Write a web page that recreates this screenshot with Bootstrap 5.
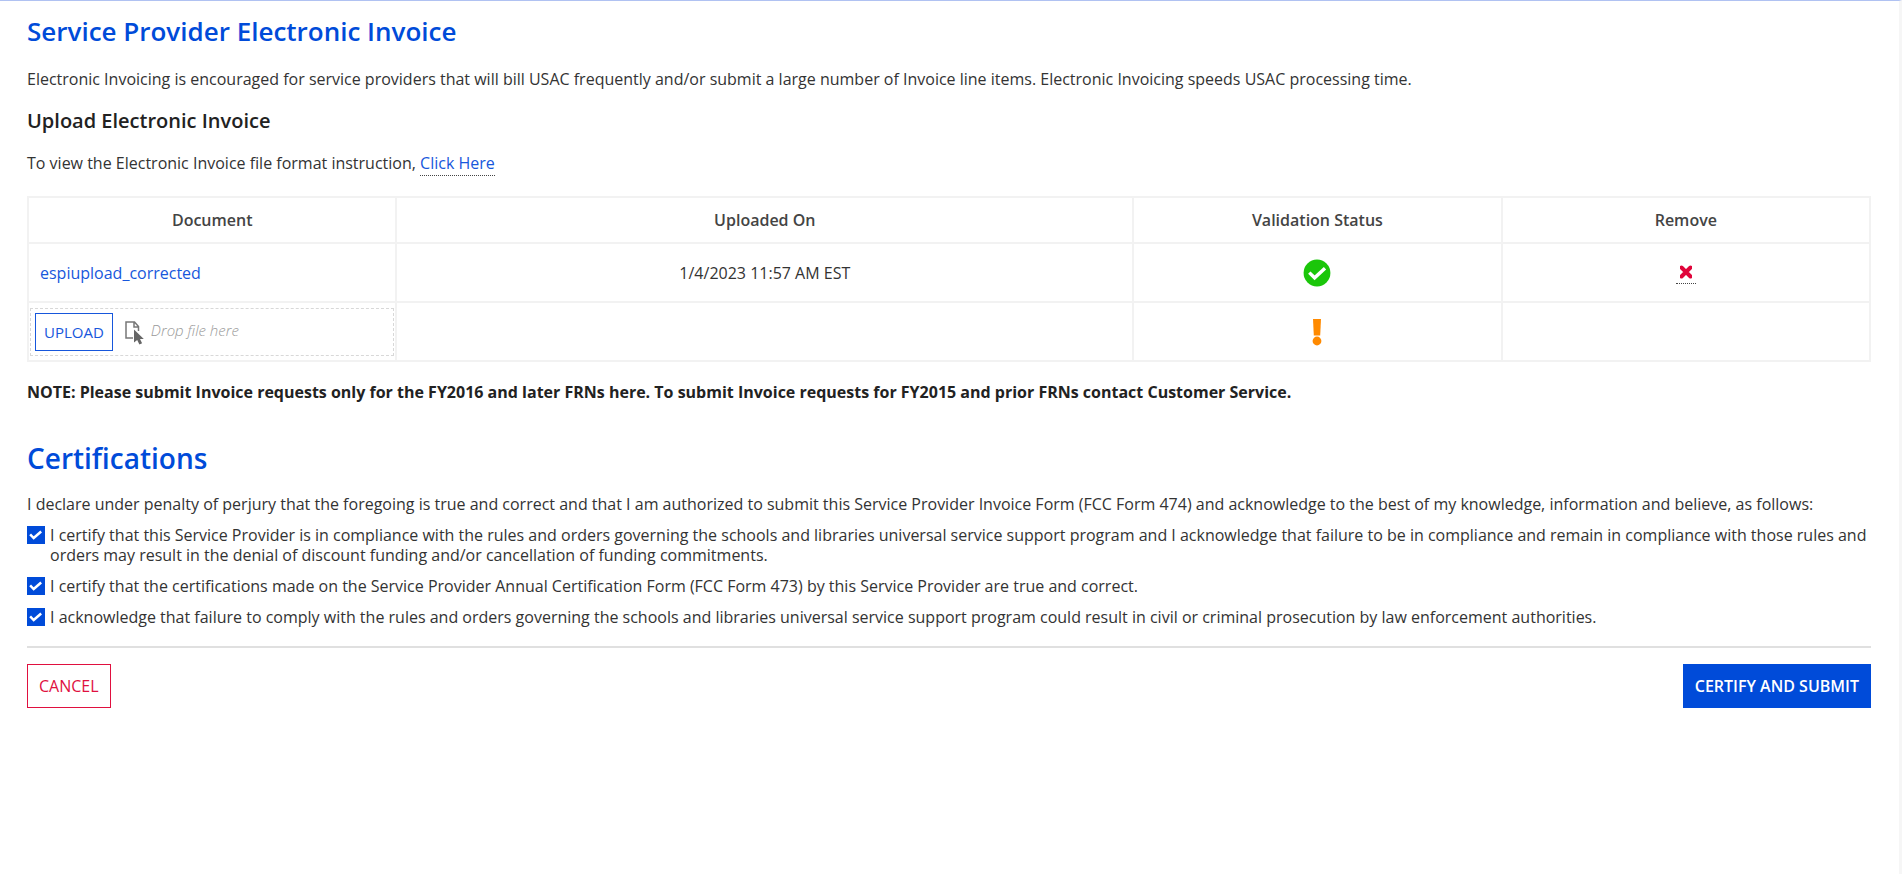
<!DOCTYPE html>
<html lang="en">
<head>
<meta charset="utf-8">
<meta name="viewport" content="width=device-width, initial-scale=1">
<title>Service Provider Electronic Invoice</title>
<link href="https://cdn.jsdelivr.net/npm/bootstrap@5.3.0/dist/css/bootstrap.min.css" rel="stylesheet">
<style>
  :root { --brand: #004bd9; --danger-ink: #e0103f; --grid-line: #f2f2f2; }
  body { font-family: "Open Sans", sans-serif; font-size: 16px; line-height: 20px; color: #333; background: #fff; }
  .page-shell { min-height: 100vh; border-top: 1px solid #b0c2f2; border-right: 3px solid #f6f6f6; padding: 13px 28px 24px 27px; }
  h1, h2 { color: var(--brand); font-weight: 600; margin: 0; }
  h1 { font-size: 26px; line-height: 35px; }
  h2 { font-size: 28px; line-height: 32px; }
  h3 { font-size: 20px; line-height: 24px; font-weight: 600; color: #222; margin: 0; }
  a { color: #1757dc; text-decoration: none; }
  .dotted-link { border-bottom: 1px dotted #444; padding-bottom: 1px; }
  .format-help { margin: 20px 0 23px; }
  .doc-table { table-layout: fixed; margin: 0; --bs-table-color: #333; border-color: var(--grid-line); }
  .doc-table > :not(caption) > * > * { border: 2px solid var(--grid-line); padding: 0 11px; }
  .doc-table thead th { height: 46px; font-weight: 600; color: #444; text-align: center; vertical-align: middle; }
  .doc-table tbody td { height: 59px; text-align: center; vertical-align: middle; }
  .doc-table tbody td.doc-cell { text-align: left; }
  .doc-table tbody td.drop-cell { padding: 0 1px; }
  .drop-zone { border: 1px dashed #d8d8d8; height: 48px; padding: 0 4px; }
  .btn { --bs-btn-border-radius: 0; font-size: 16px; line-height: 20px; }
  .btn-upload { color: #1757dc; border: 1px solid #1757dc; font-size: 15px; padding: 8px; }
  .btn-upload:hover { color: #fff; background: var(--brand); }
  .drop-hint { color: #999; font-size: 15px; font-style: italic; font-weight: 300; padding-bottom: 4px; }
  .remove-link { padding: 0 4px 1px; }
  .note-text { font-weight: 700; color: #222; }
  .cert-list { gap: 11px; margin-top: 11px; }
  .form-check { padding-left: 23px; min-height: 20px; margin: 0; }
  .form-check .form-check-input { width: 18px; height: 18px; margin: 1px 0 0 -23px; border-radius: 0; border-color: var(--brand); }
  .form-check-input:checked { background-color: var(--brand); }
  .form-check-input:checked[type=checkbox] {
    background-image: url("data:image/svg+xml,%3csvg xmlns='http://www.w3.org/2000/svg' viewBox='0 0 18 18'%3e%3cpath fill='none' stroke='%23fff' stroke-width='2.8' d='M2.400 8.400l4 4L14.800 5'/%3e%3c/svg%3e"); }
  .form-check-label { display: block; }
  .rule-line { border-top: 2px solid #e0e0e0; opacity: 1; margin: 19px 0 16px; }
  .btn-cancel { color: var(--danger-ink); border: 1px solid var(--danger-ink); font-weight: 500; padding: 11px; }
  .btn-cancel:hover { color: #fff; background: var(--danger-ink); }
  .btn-certify { color: #fff; background: var(--brand); border: 1px solid var(--brand); font-weight: 600; padding: 11px; }
  .btn-certify:hover { color: #fff; background: #003cae; }
  svg { display: block; }
</style>
</head>
<body>
<main class="page-shell">
  <h1>Service Provider Electronic Invoice</h1>
  <p class="mt-3 pt-1 mb-3">Electronic Invoicing is encouraged for service providers that will bill USAC frequently and/or submit a large number of Invoice line items. Electronic Invoicing speeds USAC processing time.</p>
  <h3 class="pt-1">Upload Electronic Invoice</h3>
  <p class="format-help">To view the Electronic Invoice file format instruction, <a href="#" class="dotted-link">Click Here</a></p>

  <table class="table doc-table">
    <colgroup><col style="width:20%"><col style="width:40%"><col style="width:20%"><col style="width:20%"></colgroup>
    <thead>
      <tr><th scope="col">Document</th><th scope="col">Uploaded On</th><th scope="col">Validation Status</th><th scope="col">Remove</th></tr>
    </thead>
    <tbody>
      <tr>
        <td class="doc-cell"><a href="#">espiupload_corrected</a></td>
        <td>1/4/2023 11:57 AM EST</td>
        <td>
          <svg class="mx-auto" width="28" height="28" viewBox="0 0 28 28" role="img" aria-label="Valid"><circle cx="14" cy="14" r="13.4" fill="#1bc60a"/><path d="M6.300 13.600l5.300 5.200L22 9.200" fill="none" stroke="#fff" stroke-width="3.400"/></svg>
        </td>
        <td>
          <a href="#" class="dotted-link remove-link d-inline-block align-middle" aria-label="Remove document"><svg width="12" height="19" viewBox="0 0 12 19"><path d="M1.500 3.500l9 9M10.500 3.500l-9 9" transform="translate(0 1)" stroke="#e0053a" stroke-width="4" stroke-linecap="round"/></svg></a>
        </td>
      </tr>
      <tr>
        <td class="drop-cell">
          <div class="drop-zone d-flex align-items-center">
            <button type="button" class="btn btn-upload">UPLOAD</button>
            <svg class="ms-2" width="26" height="26" viewBox="0 0 26 26" aria-hidden="true">
              <path d="M12 19H5V3h8.500l4 4.500V12M13 3v5h4.500" fill="none" stroke="#777" stroke-width="1.500"/>
              <path d="M13 10.500V23.600l3.200-2.700 2.200 4.700 2.700-1.300-2.100-4.300h3.800z" fill="#666"/>
            </svg>
            <span class="drop-hint ms-1">Drop file here</span>
          </div>
        </td>
        <td></td>
        <td>
          <svg class="mx-auto" width="10" height="28" viewBox="0 0 10 28" role="img" aria-label="Pending"><path d="M1 1h8l-.8 16.500H1.800z" fill="#ff8a00"/><circle cx="5" cy="23" r="4.400" fill="#ff8a00"/></svg>
        </td>
        <td></td>
      </tr>
    </tbody>
  </table>

  <p class="note-text mt-3 pt-1 mb-0">NOTE: Please submit Invoice requests only for the FY2016 and later FRNs here. To submit Invoice requests for FY2015 and prior FRNs contact Customer Service.</p>

  <section>
    <h2 class="mt-4 pt-3">Certifications</h2>
    <p class="mt-3 pt-1 mb-0">I declare under penalty of perjury that the foregoing is true and correct and that I am authorized to submit this Service Provider Invoice Form (FCC Form 474) and acknowledge to the best of my knowledge, information and believe, as follows:</p>
    <div class="d-grid cert-list">
      <div class="form-check">
        <input class="form-check-input" type="checkbox" id="cert1" checked>
        <label class="form-check-label" for="cert1">I certify that this Service Provider is in compliance with the rules and orders governing the schools and libraries universal service support program and I acknowledge that failure to be in compliance and remain in compliance with those rules and orders may result in the denial of discount funding and/or cancellation of funding commitments.</label>
      </div>
      <div class="form-check">
        <input class="form-check-input" type="checkbox" id="cert2" checked>
        <label class="form-check-label" for="cert2">I certify that the certifications made on the Service Provider Annual Certification Form (FCC Form 473) by this Service Provider are true and correct.</label>
      </div>
      <div class="form-check">
        <input class="form-check-input" type="checkbox" id="cert3" checked>
        <label class="form-check-label" for="cert3">I acknowledge that failure to comply with the rules and orders governing the schools and libraries universal service support program could result in civil or criminal prosecution by law enforcement authorities.</label>
      </div>
    </div>
  </section>

  <hr class="rule-line">
  <div class="d-flex justify-content-between">
    <button type="button" class="btn btn-cancel">CANCEL</button>
    <button type="submit" class="btn btn-certify">CERTIFY AND SUBMIT</button>
  </div>
</main>
<script src="https://cdn.jsdelivr.net/npm/bootstrap@5.3.0/dist/js/bootstrap.bundle.min.js"></script>
</body>
</html>
